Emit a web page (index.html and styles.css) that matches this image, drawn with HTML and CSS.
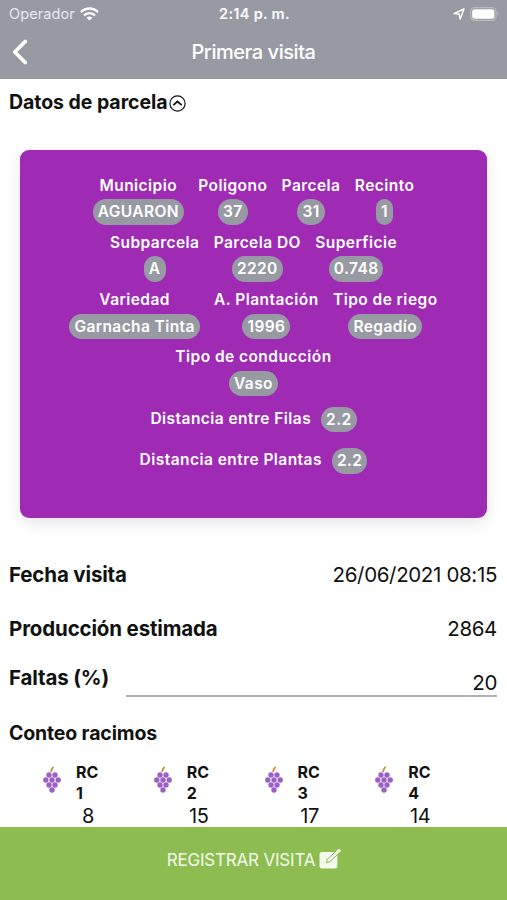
FILE: index.html
```
<!DOCTYPE html>
<html lang="es">
<head>
  <meta charset="UTF-8">
  <meta name="viewport" content="width=device-width, initial-scale=1">
  <title>Primera visita</title>
  <link rel="stylesheet" href="styles.css">
</head>
<body>
  <!-- Grape icon shared by all the counters -->
  <svg class="sprite" width="0" height="0">
    <symbol id="grapes" viewBox="0 0 18 27">
      <path d="M8 6 Q8.600 2.500 10.500 .8" fill="none" stroke="#c98a3c" stroke-width="1.700"/>
      <g fill="#9b5fc6">
        <circle cx="6" cy="9" r="2.700"/><circle cx="12" cy="9" r="2.700"/>
        <circle cx="2.800" cy="14" r="2.700"/><circle cx="9" cy="14" r="2.700"/><circle cx="15.200" cy="14" r="2.700"/>
        <circle cx="6" cy="19" r="2.700"/><circle cx="12" cy="19" r="2.700"/>
        <circle cx="9" cy="24" r="2.700"/>
      </g>
    </symbol>
  </svg>

  <div class="app">
    <header class="header">
      <div class="status-bar">
        <div class="status-left">
          <span class="carrier">Operador</span>
          <svg width="19" height="14" viewBox="0 0 19 14" fill="none" stroke="#fff" stroke-width="2.300">
            <path d="M1 5.100 C5.800 .3 13.200 .3 18 5.100"/>
            <path d="M4 8.400 C7.200 5.300 11.800 5.300 15 8.400"/>
            <path d="M6.600 10.700 C8.300 9.200 10.700 9.200 12.400 10.700 L9.500 13.600 Z" fill="#fff" stroke="none"/>
          </svg>
        </div>
        <span class="clock">2:14 p. m.</span>
        <div class="status-right">
          <svg width="12" height="12" viewBox="0 0 12 12" fill="none" stroke="#fff" stroke-width="1.400" stroke-linejoin="round">
            <path d="M11 1 L1 5.600 L6.200 6 L7.200 11 Z"/>
          </svg>
          <svg width="30" height="14" viewBox="0 0 30 14">
            <rect x=".6" y=".6" width="25.400" height="12.800" rx="4" fill="none" stroke="#b9bac0" stroke-width="1.200"/>
            <rect x="2.200" y="2.200" width="22.200" height="9.600" rx="2.500" fill="#fff"/>
            <path d="M27.500 4.800 Q29.600 7 27.500 9.200 Z" fill="#b9bac0"/>
          </svg>
        </div>
      </div>
      <div class="nav-bar">
        <button class="back-btn" aria-label="Volver">
          <svg width="16" height="26" viewBox="0 0 16 26" fill="none" stroke="#fff" stroke-width="3.800" stroke-linecap="round" stroke-linejoin="round">
            <path d="M13.200 2.500 L2.800 13 L13.200 23.500"/>
          </svg>
        </button>
        <h1 class="nav-title">Primera visita</h1>
      </div>
    </header>

    <main class="content">
      <h2 class="section-title">
        <span>Datos de parcela</span>
        <svg width="17" height="17" viewBox="0 0 17 17" fill="none" stroke="#111" stroke-width="1.200">
          <circle cx="8.500" cy="8.500" r="7.600"/>
          <path d="M4.300 10.200 L8.500 6.500 L12.700 10.200" stroke-width="1.700"/>
        </svg>
      </h2>

      <section class="card">
        <div class="card-row">
          <div class="field"><span class="label">Municipio</span><span class="pill">AGUARON</span></div>
          <div class="field"><span class="label">Poligono</span><span class="pill">37</span></div>
          <div class="field"><span class="label">Parcela</span><span class="pill">31</span></div>
          <div class="field"><span class="label">Recinto</span><span class="pill">1</span></div>
        </div>
        <div class="card-row">
          <div class="field"><span class="label">Subparcela</span><span class="pill">A</span></div>
          <div class="field"><span class="label">Parcela DO</span><span class="pill">2220</span></div>
          <div class="field"><span class="label">Superficie</span><span class="pill">0.748</span></div>
        </div>
        <div class="card-row">
          <div class="field"><span class="label">Variedad</span><span class="pill">Garnacha Tinta</span></div>
          <div class="field"><span class="label">A. Plantación</span><span class="pill">1996</span></div>
          <div class="field"><span class="label">Tipo de riego</span><span class="pill">Regadío</span></div>
        </div>
        <div class="card-row">
          <div class="field"><span class="label">Tipo de conducción</span><span class="pill">Vaso</span></div>
        </div>
        <div class="distance"><span class="label">Distancia entre Filas</span><span class="pill">2.2</span></div>
        <div class="distance"><span class="label">Distancia entre Plantas</span><span class="pill">2.2</span></div>
      </section>

      <div class="info-row">
        <span class="info-label">Fecha visita</span>
        <span class="info-value">26/06/2021 08:15</span>
      </div>
      <div class="info-row">
        <span class="info-label">Producción estimada</span>
        <span class="info-value">2864</span>
      </div>
      <div class="input-row">
        <span class="info-label">Faltas (%)</span>
        <span class="info-value underline">20</span>
      </div>

      <h2 class="count-title">Conteo racimos</h2>
      <div class="counts">
        <div class="count">
          <svg class="grapes" width="18" height="27"><use href="#grapes"/></svg>
          <div class="count-name">RC<br>1</div>
          <div class="count-value">8</div>
        </div>
        <div class="count">
          <svg class="grapes" width="18" height="27"><use href="#grapes"/></svg>
          <div class="count-name">RC<br>2</div>
          <div class="count-value">15</div>
        </div>
        <div class="count">
          <svg class="grapes" width="18" height="27"><use href="#grapes"/></svg>
          <div class="count-name">RC<br>3</div>
          <div class="count-value">17</div>
        </div>
        <div class="count">
          <svg class="grapes" width="18" height="27"><use href="#grapes"/></svg>
          <div class="count-name">RC<br>4</div>
          <div class="count-value">14</div>
        </div>
      </div>
    </main>

    <button class="submit-btn">
      <span>REGISTRAR VISITA</span>
      <svg width="23" height="23" viewBox="0 0 23 23">
        <rect x=".5" y="4" width="17.800" height="16.500" rx="2.500" fill="#f4f9ed"/>
        <path d="M7.300 14.700 L8.500 11 L18.800 1.600 L21.300 3.900 L11 13.600 Z" fill="#f4f9ed" stroke="#8dbd51" stroke-width="1"/>
        <path d="M17.500 3 L20 .8 L22.200 2.800 L19.800 5.100 Z" fill="#f4f9ed"/>
      </svg>
    </button>
  </div>
</body>
</html>
```
FILE: styles.css
```
* {
  box-sizing: border-box;
  font-family: 'Inter', sans-serif;
}

body {
  margin: 0;
  background-color: #fff;
  color: #111;
}

h1, h2 {
  margin: 0;
}

button {
  padding: 0;
  border: none;
  background: none;
}

svg {
  display: block;
  flex-shrink: 0;
}

.sprite {
  position: absolute;
}

.app {
  height: 900px;
  display: flex;
  flex-direction: column;
  overflow: hidden;
}

/* Header */
.header {
  height: 79px;
  flex-shrink: 0;
  background-color: #989aa3;
  color: #fff;
}

.status-bar {
  height: 27px;
  padding: 0 7px 0 9px;
  display: grid;
  grid-template-columns: 1fr auto 1fr;
  align-items: center;
}

.status-left, .status-right {
  display: flex;
  align-items: center;
}

.status-left {
  gap: 5px;
}

.status-right {
  justify-content: flex-end;
  gap: 5px;
}

.carrier {
  font-size: 14.5px;
  letter-spacing: 0.1px;
  color: #e8e8eb;
}

.clock {
  font-size: 14.5px;
  font-weight: 600;
  letter-spacing: 0.3px;
}

.nav-bar {
  height: 50px;
  padding: 0 12px;
  display: grid;
  grid-template-columns: 1fr auto 1fr;
  align-items: center;
}

.nav-title {
  font-size: 20px;
  font-weight: 500;
  letter-spacing: -0.45px;
}

/* Parcel card */
.content {
  flex: 1;
  min-height: 0;
  overflow: hidden;
}

.section-title {
  height: 46px;
  padding-left: 9px;
  display: flex;
  align-items: center;
  gap: 1px;
  font-size: 19.5px;
  font-weight: 700;
  letter-spacing: -0.05px;
}

.section-title svg {
  margin-top: 2px;
}

.card {
  height: 368px;
  margin: 25px 20px 0;
  padding-top: 25.5px;
  border-radius: 9px;
  background-color: #9f2bb5;
  color: #fff;
  box-shadow: 0 5px 16px rgba(0, 0, 0, 0.1);
}

.card-row {
  height: 57.3px;
  display: flex;
  justify-content: center;
  gap: 14.3px;
}

.field {
  display: flex;
  flex-direction: column;
  align-items: center;
}

.label {
  font-size: 15.5px;
  font-weight: 600;
  line-height: 20px;
  letter-spacing: 0.45px;
  margin-bottom: 3.5px;
  white-space: nowrap;
}

.pill {
  height: 25.5px;
  padding: 0 5px;
  border-radius: 13px;
  background-color: #989aa3;
  font-size: 15.5px;
  font-weight: 600;
  line-height: 25.5px;
  letter-spacing: 0.4px;
  white-space: nowrap;
}

.distance {
  height: 41.7px;
  padding-top: 2px;
  display: flex;
  justify-content: center;
  gap: 10px;
}

.distance .label {
  padding-top: 2px;
}

/* Visit info */
.info-row {
  height: 54px;
  padding: 0 10px 0 9px;
  display: flex;
  justify-content: space-between;
  align-items: center;
}

.card + .info-row {
  margin-top: 30px;
}

.info-label {
  padding-bottom: 1px;
  font-size: 20.5px;
  font-weight: 700;
  letter-spacing: -0.15px;
  white-space: nowrap;
}

.info-value {
  padding-bottom: 2px;
  font-size: 20.5px;
  letter-spacing: -0.35px;
  text-align: right;
}

.input-row {
  height: 41px;
  padding: 0 10px 0 9px;
  display: flex;
  gap: 17px;
}

.input-row .info-label {
  padding-top: 9px;
}

.underline {
  flex: 1;
  padding-top: 14px;
  border-bottom: 2px solid #b0b0b0;
}

/* Bunch counters */
.count-title {
  padding: 24px 0 0 9px;
  font-size: 19.5px;
  font-weight: 700;
  line-height: 24px;
  letter-spacing: -0.15px;
}

.counts {
  padding: 17px 21px 0 43px;
  display: grid;
  grid-template-columns: repeat(4, 1fr);
}

.count {
  display: grid;
  grid-template-columns: 33px 24px;
  align-content: start;
}

.grapes {
  margin-top: 4px;
}

.count-name {
  font-size: 16px;
  font-weight: 700;
  line-height: 20.5px;
}

.count-value {
  grid-column: 2;
  font-size: 20px;
  line-height: 26px;
  letter-spacing: -0.4px;
  text-align: center;
}

/* Bottom action */
.submit-btn {
  height: 73px;
  flex-shrink: 0;
  padding: 0 0 8px 2px;
  display: flex;
  justify-content: center;
  align-items: center;
  gap: 4px;
  background-color: #8dbd51;
  color: #f4f9ed;
  font-size: 17px;
  letter-spacing: -0.2px;
}
```
